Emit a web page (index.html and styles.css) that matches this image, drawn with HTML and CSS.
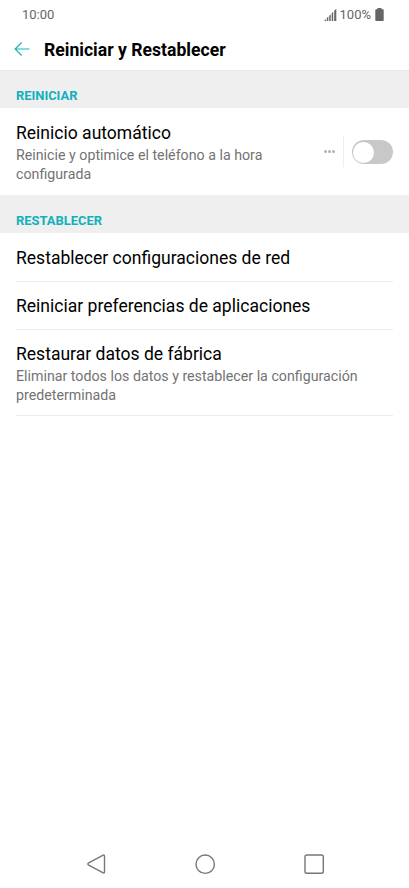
FILE: index.html
```html
<!DOCTYPE html>
<html lang="es">
<head>
<meta charset="utf-8">
<title>Reiniciar y Restablecer</title>
<link rel="stylesheet" href="styles.css">
</head>
<body>
<div class="status">
  <span class="clock">10:00</span>
  <svg class="signal" width="13" height="13" viewBox="0 0 13 13"><path d="M0 13 2 11V13zM2.800 13v-3l1.500-1.500V13zM5.200 13V7.800l1.500-1.500V13zM7.700 13V5.300l1.500-1.500V13zM10.200 13V2.800L12.300.7V13z"/></svg>
  <span class="percent">100%</span>
  <svg class="battery" width="9" height="13" viewBox="0 0 9 13"><path d="M2.500 0h4v1.300H8q.7 0 .7.700V12.200q0 .7-.7.700H1q-.7 0-.7-.7V2q0-.7.7-.7h1.500z"/></svg>
</div>
<header class="appbar">
  <svg class="back" width="16" height="14" viewBox="0 0 16 14"><path d="M7.700.5 1.100 7l6.600 6.500M1 7h14.500"/></svg>
  <h1>Reiniciar y Restablecer</h1>
</header>
<main>
  <h2>REINICIAR</h2>
  <section class="auto">
    <div class="copy"><h3>Reinicio automático</h3><p>Reinicie y optimice el teléfono a la hora configurada</p></div>
    <div class="dots"><i></i><i></i><i></i></div>
    <div class="toggle"><span></span></div>
  </section>
  <h2 class="second">RESTABLECER</h2>
  <section class="list">
    <div class="row"><h3>Restablecer configuraciones de red</h3></div>
    <div class="row"><h3>Reiniciar preferencias de aplicaciones</h3></div>
    <div class="row tall"><h3>Restaurar datos de fábrica</h3><p>Eliminar todos los datos y restablecer la configuración predeterminada</p></div>
  </section>
</main>
<nav>
  <svg width="20" height="22" viewBox="0 0 20 22"><path d="M16.700 2.300Q18.500 1.300 18.500 3.300V18.700Q18.500 20.700 16.700 19.700L2.700 12.200Q1.100 11 2.700 9.800Z"/></svg>
  <svg width="22" height="22" viewBox="0 0 22 22"><circle cx="11.200" cy="11.200" r="9.200"/></svg>
  <svg width="22" height="22" viewBox="0 0 22 22"><rect x="2" y="2" width="18.300" height="18.300" rx="1.800"/></svg>
</nav>
</body>
</html>
```
FILE: styles.css
```css
* { box-sizing: border-box; }
body { margin: 0; height: 888px; display: flex; flex-direction: column; background: #fff; color: #000; font-family: Roboto, sans-serif; overflow: hidden; }
h1, h2, h3, p { margin: 0; }
svg { display: block; flex: none; }
.status { height: 27px; display: flex; align-items: center; padding: 1px 25px 0 22px; font-size: 13px; color: #666; }
.clock { flex: 1; }
.signal { fill: #666; }
.percent { margin: 0 4px 0 3px; }
.battery { fill: #666; }
.appbar { height: 44px; display: flex; align-items: center; padding-left: 14px; border-bottom: 1px solid #e7e7e7; }
.back { stroke: #18b4bf; stroke-width: 1.2; fill: none; }
h1 { margin-left: 14px; padding-top: 2px; font-size: 17.6px; line-height: 24px; font-weight: 700; }
h2 { height: 37px; padding: 7px 16px 0; line-height: 36px; font-size: 12.95px; font-weight: 700; letter-spacing: -.02px; color: #12b0bc; background: #efefef; }
.second { height: 38px; padding-top: 8px; }
h3 { font-size: 17.55px; line-height: 24px; font-weight: 400; }
p { padding-top: 1px; font-size: 14.22px; line-height: 18.5px; color: #737373; }
.auto { height: 87px; display: flex; padding: 13px 16px 0; }
.copy { flex: 1; padding-right: 36px; }
.dots { display: flex; gap: 1px; padding-top: 29px; width: 19px; }
.dots i { width: 3px; height: 3px; border-radius: 50%; background: #b0b0b0; }
.toggle { height: 31px; margin-top: 15px; padding: 4px 0 0 8px; border-left: 1px solid #eee; }
.toggle span { display: block; width: 41px; height: 24px; border-radius: 12px; background: #c8c8c8; padding: 1.5px 1px; }
.toggle span::before { content: ""; display: block; width: 21px; height: 21px; border-radius: 50%; background: #fff; }
.list { padding: 0 16px; }
.row { height: 48px; padding-top: 12px; border-bottom: 1px solid #ececec; }
.row:first-child { height: 49px; padding-top: 13px; }
.tall { height: 86px; }
nav { margin-top: auto; height: 48px; display: flex; justify-content: space-between; padding: 13px 84px 0 86px; }
nav svg { stroke: #777; stroke-width: 1.4; fill: none; stroke-linejoin: round; }
```
